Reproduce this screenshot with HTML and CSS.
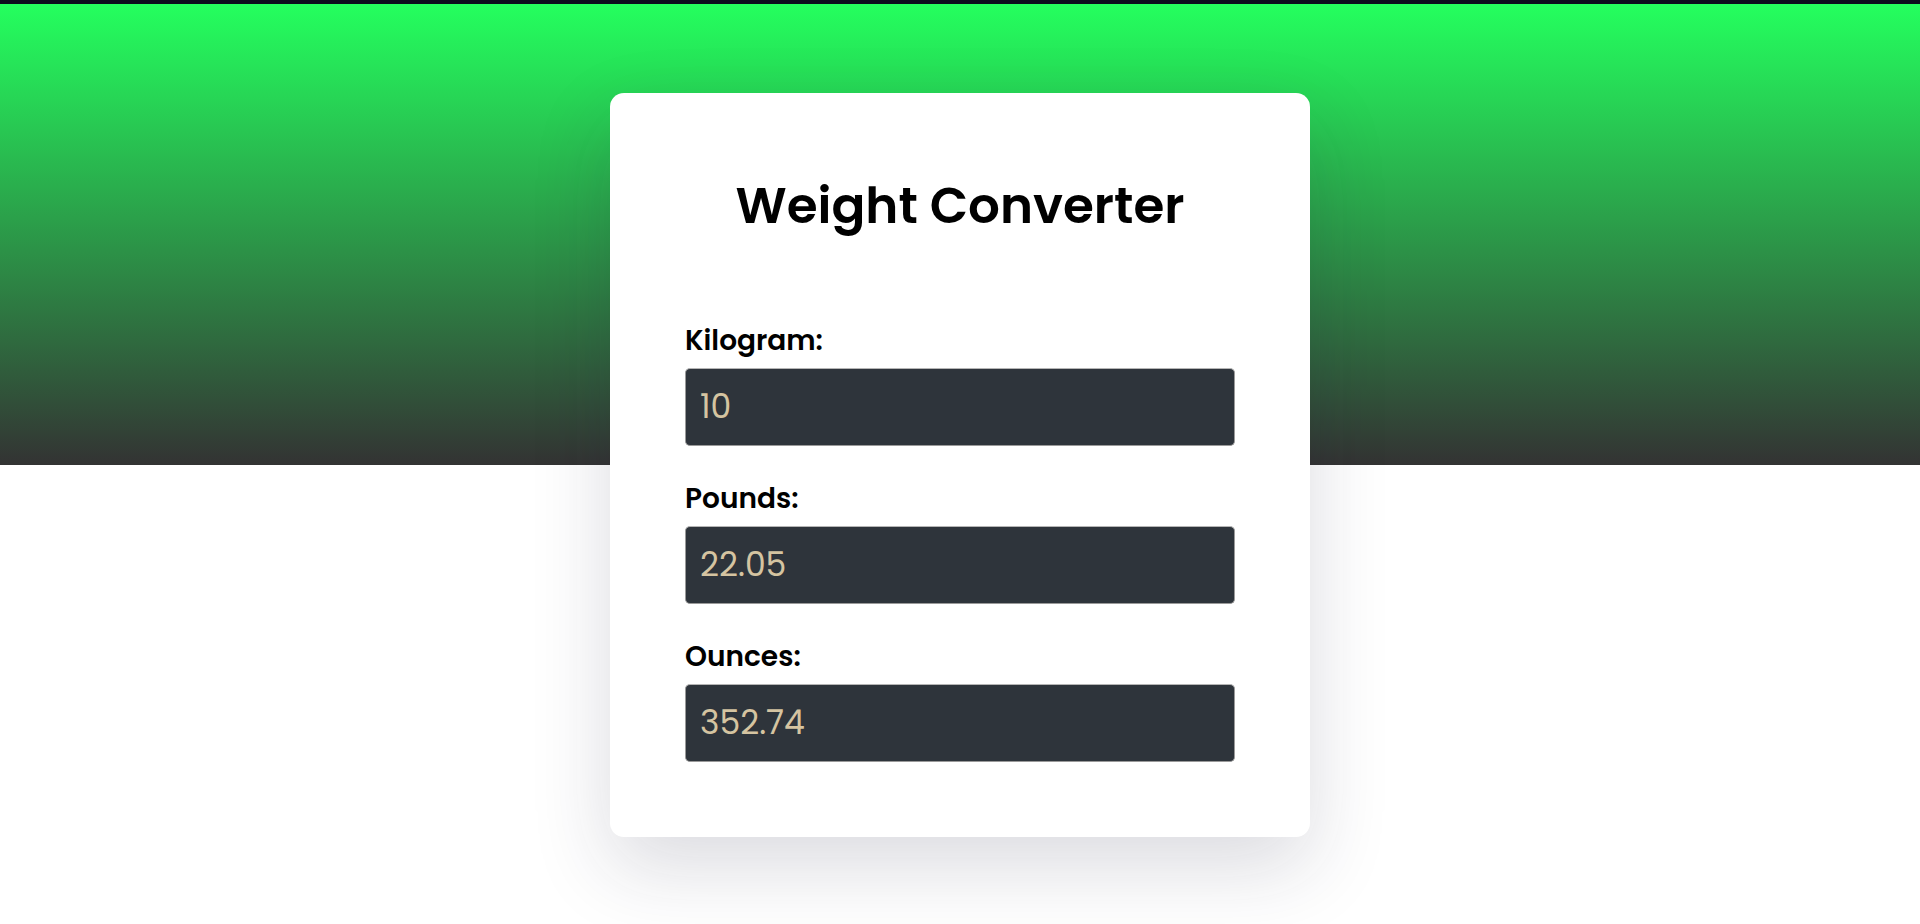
FILE: index.html
```html
<!DOCTYPE html>
<html lang="en">
<head>
<meta charset="UTF-8">
<title>Weight Converter</title>
<link rel="stylesheet" href="styles.css">
</head>
<body>
<main class="page">
  <section class="card">
    <h1 class="title">Weight Converter</h1>
    <div class="field">
      <label class="label" for="kg">Kilogram:</label>
      <input class="input" id="kg" type="text" value="10">
    </div>
    <div class="field">
      <label class="label" for="lb">Pounds:</label>
      <input class="input" id="lb" type="text" value="22.05">
    </div>
    <div class="field">
      <label class="label" for="oz">Ounces:</label>
      <input class="input" id="oz" type="text" value="352.74">
    </div>
  </section>
</main>
</body>
</html>
```

FILE: styles.css
```css
* { box-sizing: border-box; }

html, body {
  margin: 0;
  padding: 0;
}

body {
  min-height: 924px;
  border-top: 4px solid #0c0d1d;
  background: #ffffff linear-gradient(to bottom, #0c0d1d 0px, #0c0d1d 4px, #24ff5e 4px, #333333 100%) no-repeat;
  background-size: 100% 465px;
  font-family: Poppins, "Open Sans", "Noto Sans", sans-serif;
  color: #000;
}

.page {
  display: flex;
  justify-content: center;
  padding-top: 89px;
}

.card {
  width: 700px;
  background: #fff;
  border-radius: 14px;
  padding: 75px;
  box-shadow: 0 30px 80px rgba(30, 32, 60, 0.16);
  display: flex;
  flex-direction: column;
}

.title {
  margin: 0 0 78px 0;
  font-size: 50px;
  line-height: 75px;
  font-weight: 600;
  text-align: center;
}

.field {
  display: flex;
  flex-direction: column;
  gap: 8px;
}

.field + .field {
  margin-top: 33px;
}

.label {
  font-size: 28px;
  line-height: 39px;
  font-weight: 600;
}

.input {
  width: 100%;
  height: 78px;
  border: 1px solid #9a9a9a;
  border-top-color: #b5b5b5;
  border-radius: 5px;
  background: #2e343b;
  color: #d5c4a1;
  font-family: Poppins, "Open Sans", "Noto Sans", sans-serif;
  font-size: 33px;
  padding: 0 14px;
  outline: none;
}
```
